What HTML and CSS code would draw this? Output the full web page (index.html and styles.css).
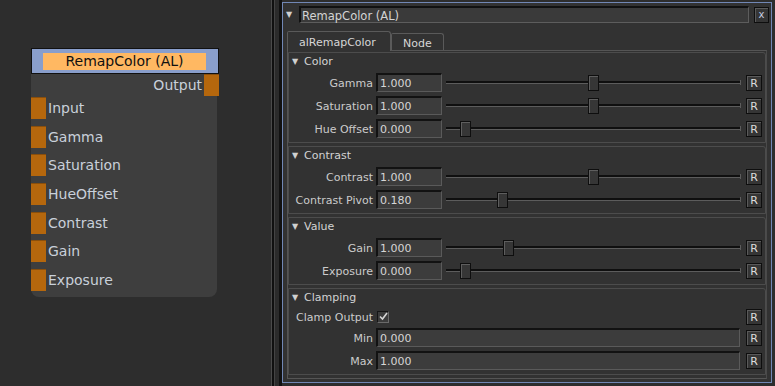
FILE: index.html
```html
<!DOCTYPE html>
<html lang="en">
<head>
    <meta charset="UTF-8">
    <title>RemapColor (AL)</title>
    <link rel="stylesheet" href="styles.css">
</head>
<body>
    <div class="canvas">
        <div class="node">
            <div class="node-title"><div class="node-label">RemapColor (AL)</div></div>
            <div class="node-body">
                <div class="node-output"><span>Output</span><div class="port port-out"></div></div>
                <div class="node-inputs">
                    <div class="node-input"><div class="port"></div><span>Input</span></div>
                    <div class="node-input"><div class="port"></div><span>Gamma</span></div>
                    <div class="node-input"><div class="port"></div><span>Saturation</span></div>
                    <div class="node-input"><div class="port"></div><span>HueOffset</span></div>
                    <div class="node-input"><div class="port"></div><span>Contrast</span></div>
                    <div class="node-input"><div class="port"></div><span>Gain</span></div>
                    <div class="node-input"><div class="port"></div><span>Exposure</span></div>
                </div>
            </div>
        </div>
    </div>

    <div class="divider"></div>

    <div class="panel">
        <div class="panel-header">
            <span class="arrow">▼</span>
            <div class="title-field">RemapColor (AL)</div>
            <div class="close-btn">x</div>
        </div>

        <div class="tabs">
            <div class="tab active">alRemapColor</div>
            <div class="tab">Node</div>
        </div>

        <div class="pane">
            <div class="section">
                <div class="section-head"><span class="arrow">▼</span>Color</div>
                <div class="knob">
                    <label>Gamma</label>
                    <div class="field">1.000</div>
                    <div class="slider"><div class="track"></div><div class="thumb" style="left: 48.1%"></div></div>
                    <div class="reset">R</div>
                </div>
                <div class="knob">
                    <label>Saturation</label>
                    <div class="field">1.000</div>
                    <div class="slider"><div class="track"></div><div class="thumb" style="left: 48.1%"></div></div>
                    <div class="reset">R</div>
                </div>
                <div class="knob">
                    <label>Hue Offset</label>
                    <div class="field">0.000</div>
                    <div class="slider"><div class="track"></div><div class="thumb" style="left: 4.7%"></div></div>
                    <div class="reset">R</div>
                </div>
            </div>

            <div class="section">
                <div class="section-head"><span class="arrow">▼</span>Contrast</div>
                <div class="knob">
                    <label>Contrast</label>
                    <div class="field">1.000</div>
                    <div class="slider"><div class="track"></div><div class="thumb" style="left: 48.1%"></div></div>
                    <div class="reset">R</div>
                </div>
                <div class="knob">
                    <label>Contrast Pivot</label>
                    <div class="field">0.180</div>
                    <div class="slider"><div class="track"></div><div class="thumb" style="left: 17.3%"></div></div>
                    <div class="reset">R</div>
                </div>
            </div>

            <div class="section">
                <div class="section-head"><span class="arrow">▼</span>Value</div>
                <div class="knob">
                    <label>Gain</label>
                    <div class="field">1.000</div>
                    <div class="slider"><div class="track"></div><div class="thumb" style="left: 19.3%"></div></div>
                    <div class="reset">R</div>
                </div>
                <div class="knob">
                    <label>Exposure</label>
                    <div class="field">0.000</div>
                    <div class="slider"><div class="track"></div><div class="thumb" style="left: 4.7%"></div></div>
                    <div class="reset">R</div>
                </div>
            </div>

            <div class="section">
                <div class="section-head"><span class="arrow">▼</span>Clamping</div>
                <div class="knob knob-check">
                    <label>Clamp Output</label>
                    <div class="checkbox">
                        <svg width="9" height="9" viewBox="0 0 9 9"><polyline points="1,4.5 3.5,7 8,1" fill="none" stroke="#d6d6d6" stroke-width="1.6"/></svg>
                    </div>
                    <div class="spacer"></div>
                    <div class="reset">R</div>
                </div>
                <div class="knob">
                    <label>Min</label>
                    <div class="field field-wide">0.000</div>
                    <div class="reset">R</div>
                </div>
                <div class="knob">
                    <label>Max</label>
                    <div class="field field-wide">1.000</div>
                    <div class="reset">R</div>
                </div>
            </div>
        </div>
    </div>
</body>
</html>
```

FILE: styles.css
```css
* {
    margin: 0;
    padding: 0;
    box-sizing: border-box;
}

body {
    font-family: 'DejaVu Sans', 'Liberation Sans', sans-serif;
    background: #2d2d2d;
    width: 775px;
    height: 386px;
    overflow: hidden;
    display: flex;
}

/* Node graph */
.canvas {
    width: 271px;
    padding: 48px 0 0 31px;
}

.node {
    width: 188px;
}

.node-title {
    height: 26px;
    background: #899ecb;
    border: 1px solid #111;
    padding: 4px 12px 0 11px;
}

.node-label {
    height: 17px;
    background: #ffb862;
    color: #111;
    font-size: 14px;
    line-height: 17px;
    text-align: center;
}

.node-body {
    width: 186px;
    height: 223px;
    background: #3e3e3e;
    border-radius: 0 0 8px 8px;
    color: #c9d0da;
    font-size: 14px;
}

.node-output {
    height: 22px;
    display: flex;
    justify-content: flex-end;
    align-items: center;
    gap: 2px;
    margin-right: -2px;
}

.node-inputs {
    display: flex;
    flex-direction: column;
    gap: 6.67px;
    margin-top: 1px;
}

.node-input {
    height: 22px;
    display: flex;
    align-items: center;
    gap: 2px;
}

.port {
    width: 15px;
    height: 22px;
    background: #b5670d;
    border-top: 1px solid #8a4f0c;
}

/* Divider between graph and properties */
.divider {
    width: 11px;
    background: linear-gradient(to right, #4a4a4a 0 1px, #101010 1px 3px, #444 3px 4px, #2b2b2b 4px 8px, #111 8px 11px);
}

/* Properties panel */
.panel {
    flex: 1;
    margin: 2px 3px 3px 0;
    border: 1px solid #7187b5;
    background: #323232;
    padding: 3px 1px 3px 3px;
    display: flex;
    flex-direction: column;
    color: #cbcbcb;
    font-size: 11px;
}

.arrow {
    display: inline-block;
    font-size: 8px;
    color: #d0d0d0;
}

.panel-header {
    height: 17px;
    display: flex;
    align-items: center;
}

.panel-header .arrow {
    width: 13px;
}

.title-field {
    flex: 1;
    height: 17px;
    background: #3a3a3a;
    border-top: 2px solid #111;
    border-left: 2px solid #111;
    border-right: 1px solid #5d5d5d;
    border-bottom: 1px solid #5d5d5d;
    padding: 1px 0 0 1px;
    font-size: 11.5px;
    line-height: 14px;
    color: #d4d4d4;
    margin-right: 5px;
}

.close-btn {
    width: 15px;
    height: 16px;
    margin: 1px 1px 0 0;
    border: 1px solid #0e0e0e;
    box-shadow: inset 1px 1px #5a5a5a;
    background: #353535;
    color: #c5cde0;
    font-size: 10px;
    line-height: 13px;
    text-align: center;
}

.tabs {
    display: flex;
    align-items: flex-end;
    margin: 8px 0 0 1px;
    height: 19px;
}

.tab {
    height: 17px;
    padding: 1px 11px 0;
    border: 1px solid #5a5a5a;
    border-bottom: none;
    border-radius: 2px 3px 0 0;
    color: #d6d6d6;
    line-height: 17px;
}

.tab.active {
    height: 20px;
    width: 104px;
    background: #323232;
    margin-bottom: -1px;
    position: relative;
    line-height: 20px;
}

.pane {
    flex: 1;
    margin: 0 3px 4px 1px;
    border: 1px solid #555;
    border-right-color: #4a4a4a;
    padding: 1px 0 0;
}

.section {
    border: 1px solid #4c4c4c;
    border-radius: 0 3px 0 0;
    margin-bottom: 3px;
    padding-bottom: 4px;
    display: flex;
    flex-direction: column;
    gap: 4px;
}

.section-head {
    height: 16px;
    display: flex;
    align-items: center;
    padding: 1px 0 0 3px;
    color: #d2d2d2;
}

.section-head .arrow {
    width: 12px;
}

.knob {
    height: 19px;
    display: flex;
    align-items: center;
    padding-right: 3px;
}

.knob label {
    width: 84px;
    text-align: right;
    margin: 2px 3px 0 0;
    white-space: nowrap;
}

.field {
    width: 66px;
    height: 19px;
    background: #3c3c3c;
    border-top: 2px solid #121212;
    border-left: 2px solid #121212;
    border-right: 1px solid #5a5a5a;
    border-bottom: 1px solid #5a5a5a;
    padding: 1px 0 0 2px;
    line-height: 15px;
    color: #d6d6d6;
}

.field-wide {
    width: auto;
    flex: 1;
    margin-right: 6px;
}

.slider {
    flex: 1;
    height: 19px;
    margin: 0 5px 0 4px;
    position: relative;
    display: flex;
    align-items: center;
}

.track {
    flex: 1;
    height: 3px;
    border-top: 2px solid #0f0f0f;
    border-bottom: 1px solid #5c5c5c;
    position: relative;
}

.track::after {
    content: '';
    position: absolute;
    right: 0;
    top: -3px;
    width: 1px;
    height: 5px;
    background: #5c5c5c;
}

.thumb {
    position: absolute;
    top: 2px;
    width: 11px;
    height: 16px;
    background: #363636;
    border: 1px solid #0e0e0e;
    box-shadow: inset 1px 1px #5e5e5e;
}

.reset {
    width: 16px;
    height: 16px;
    border: 1px solid #0e0e0e;
    box-shadow: inset 1px 1px #5a5a5a;
    background: #353535;
    color: #dcdcdc;
    font-size: 11px;
    line-height: 15px;
    text-align: center;
}

.knob-check {
    height: 15px;
}

.checkbox {
    width: 12px;
    height: 12px;
    margin-left: 1px;
    background: #3c3c3c;
    border: 1px solid #6a6a6a;
    border-top-color: #151515;
    border-left-color: #151515;
    display: flex;
    align-items: center;
    justify-content: center;
}

.spacer {
    flex: 1;
}
```
